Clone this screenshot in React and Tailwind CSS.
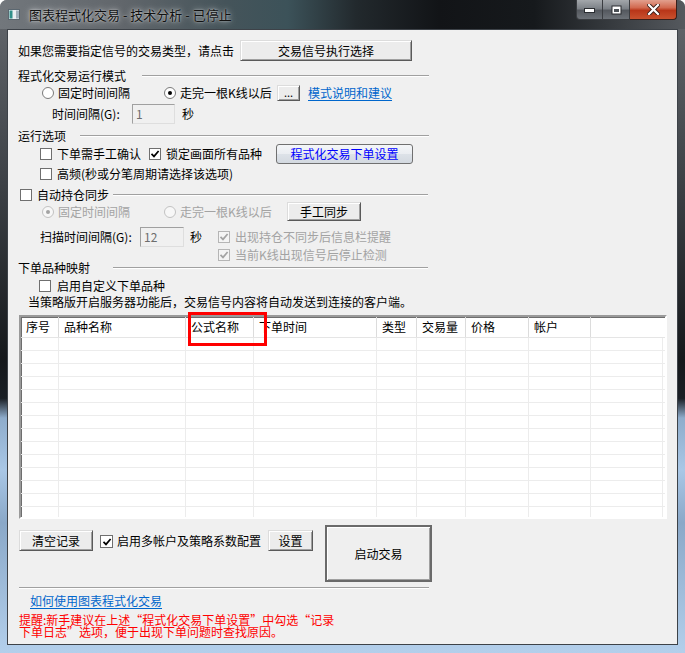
const Check = ({ checked, disabled, className = "" }) => (
  <div
    className={`w-[12px] h-[12px] shrink-0 border flex items-center justify-center ${
      disabled ? "border-[#b5b5b5] bg-[#f4f4f4]" : "border-[#6f6f6f] bg-white"
    } ${className}`}
  >
    {checked && (
      <svg width="10" height="10" viewBox="0 0 10 10">
        <path d="M1.5 4.8 L4 7.4 L8.6 2" fill="none" stroke={disabled ? "#a3a3a3" : "#000"} strokeWidth="1.7" />
      </svg>
    )}
  </div>
);

const Radio = ({ checked, disabled, className = "" }) => (
  <div
    className={`w-[12px] h-[12px] shrink-0 rounded-full border flex items-center justify-center ${
      disabled ? "border-[#c2c2c2] bg-[#f7f7f7]" : "border-[#7a7a7a] bg-white"
    } ${className}`}
  >
    {checked && <div className={`w-[4px] h-[4px] rounded-full ${disabled ? "bg-[#a3a3a3]" : "bg-black"}`} />}
  </div>
);

const Btn = ({ className = "", children }) => (
  <div
    className={`shrink-0 flex items-center justify-center bg-[#ececec] border border-t-[#dcdcdc] border-l-[#dcdcdc] border-r-[#5a5a5a] border-b-[#5a5a5a] shadow-[inset_1px_1px_0_#ffffff,inset_-1px_-1px_0_#a0a0a0] ${className}`}
  >
    {children}
  </div>
);

const Line = ({ className = "" }) => (
  <div className={`shrink-0 h-[2px] border-t border-t-[#a0a0a0] border-b border-b-white ${className}`} />
);

const Field = ({ className = "", children }) => (
  <div
    className={`shrink-0 h-[20px] flex items-center pl-[3px] bg-[#f0f0f0] text-[#6d6d6d] border border-t-[#a0a0a0] border-l-[#a0a0a0] border-r-[#dedede] border-b-[#dedede] ${className}`}
  >
    {children}
  </div>
);

const cols = [
  { w: "w-[38px]", t: "序号" },
  { w: "w-[127px]", t: "品种名称" },
  { w: "w-[68px]", t: "公式名称" },
  { w: "w-[123px]", t: "下单时间" },
  { w: "w-[40px]", t: "类型" },
  { w: "w-[49px]", t: "交易量" },
  { w: "w-[63px]", t: "价格" },
  { w: "w-[62px]", t: "帐户" },
];

export default function App() {
  return (
    <div className="w-[685px] h-[653px] overflow-hidden whitespace-nowrap rounded-t-[7px] bg-[linear-gradient(180deg,#64686d_0%,#3a3e43_30%,#15181b_55%,#1a1f25_61%,#8eaccb_64%,#a9c7e6_72%,#8aa8c8_80%,#b3cfeb_100%)] font-['Noto_Sans_CJK_SC',sans-serif] text-[12px] leading-[12px] text-black">
      {/* title bar */}
      <div className="h-[29px] flex items-start bg-[linear-gradient(90deg,#72777c_0%,#61666b_18%,#45545a_33%,#3c5259_42%,#22292d_52%,#121417_64%,#16191c_78%,#33373b_88%,#55595e_100%)]">
        <svg className="ml-[8px] mt-[9px] shrink-0" width="12" height="11" viewBox="0 0 12 11">
          <rect x="0.5" y="0.5" width="11" height="10" fill="#e8eef2" stroke="#5b6770" />
          <rect x="1.5" y="1.5" width="3" height="8" fill="#2f8f8a" />
          <rect x="8" y="1.5" width="3" height="8" fill="#9fb0bc" />
        </svg>
        <span className="ml-[9px] mt-[8px] text-[13px] leading-[13px] text-[#111] [text-shadow:0_0_6px_rgba(255,255,255,0.8),0_0_2px_rgba(255,255,255,0.6)]">
          图表程式化交易 - 技术分析 - 已停止
        </span>
        <div className="ml-auto mr-[8px] flex h-[20px]">
          <div className="flex rounded-bl-[4px] border border-t-0 border-[#3a3d41] overflow-hidden">
            <div className="w-[26px] h-full flex items-center justify-center bg-[linear-gradient(180deg,#a3a7ab_0%,#7c8187_45%,#55595f_55%,#6d7278_100%)] border-r border-[#3a3d41]">
              <svg width="11" height="6" viewBox="0 0 11 6">
                <rect x="0.5" y="1.5" width="10" height="4" fill="#fff" stroke="#2a2d31" />
              </svg>
            </div>
            <div className="w-[26px] h-full flex items-center justify-center bg-[linear-gradient(180deg,#a3a7ab_0%,#7c8187_45%,#55595f_55%,#6d7278_100%)]">
              <svg width="11" height="10" viewBox="0 0 11 10">
                <rect x="0.5" y="0.5" width="10" height="9" fill="#2a2d31" />
                <rect x="1.5" y="1.5" width="8" height="7" fill="#fff" />
                <rect x="3" y="4" width="5" height="3" fill="#4b5055" />
              </svg>
            </div>
          </div>
          <div className="w-[47px] h-full flex items-center justify-center rounded-br-[4px] border border-t-0 border-l-0 border-[#3a1f1a] bg-[linear-gradient(180deg,#e2a08e_0%,#d26a50_40%,#b93619_55%,#c9512e_100%)]">
            <svg width="13" height="11" viewBox="0 0 13 11">
              <path d="M2 1 L11 10 M11 1 L2 10" stroke="#3a1d16" strokeWidth="4" strokeLinecap="square" />
              <path d="M2 1 L11 10 M11 1 L2 10" stroke="#fff" strokeWidth="2.2" strokeLinecap="square" />
            </svg>
          </div>
        </div>
      </div>

      {/* client area */}
      <div className="relative mx-[7px] h-[616px] border border-[#3d4248] bg-[#f0f0f0] flex flex-col">
        <div className="mt-[10px] h-[21px] flex items-center">
          <span className="ml-[10px] w-[216px] shrink-0">如果您需要指定信号的交易类型，请点击</span>
          <Btn className="ml-[6px] w-[172px] h-[21px]">交易信号执行选择</Btn>
        </div>

        <div className="mt-[8px] h-[14px] flex items-center">
          <span className="ml-[10px] w-[108px] shrink-0">程式化交易运行模式</span>
          <Line className="ml-[16px] w-[287px]" />
        </div>

        <div className="mt-[2px] h-[16px] flex items-center">
          <Radio className="ml-[34px]" />
          <span className="ml-[4px] w-[72px] shrink-0">固定时间间隔</span>
          <Radio checked className="ml-[34px]" />
          <span className="ml-[4px] w-[90px] shrink-0">走完一根K线以后</span>
          <Btn className="ml-[7px] w-[23px] h-[16px] text-[11px] pb-[3px]">...</Btn>
          <span className="ml-[8px] text-[#0066cc] underline underline-offset-2">模式说明和建议</span>
        </div>

        <div className="mt-[3px] h-[20px] flex items-center">
          <span className="ml-[44px] w-[80px] shrink-0">时间间隔(G):</span>
          <Field className="w-[43px]">1</Field>
          <span className="ml-[7px]">秒</span>
        </div>

        <div className="mt-[5px] h-[14px] flex items-center">
          <span className="ml-[10px] w-[48px] shrink-0">运行选项</span>
          <Line className="ml-[14px] w-[349px]" />
        </div>

        <div className="mt-[1px] h-[20px] flex items-center">
          <Check className="ml-[32px]" />
          <span className="ml-[5px] w-[84px] shrink-0">下单需手工确认</span>
          <Check checked className="ml-[8px]" />
          <span className="ml-[5px] w-[96px] shrink-0">锁定画面所有品种</span>
          <div className="ml-[14px] w-[137px] h-[20px] shrink-0 flex items-center justify-center rounded-[3px] border border-[#707070] bg-[linear-gradient(180deg,#f4f6f8_0%,#eaedf1_50%,#dde2e8_51%,#d3d9e0_100%)] text-[#0000ff]">
            程式化交易下单设置
          </div>
        </div>

        <div className="mt-[3px] h-[14px] flex items-center">
          <Check className="ml-[32px]" />
          <span className="ml-[5px]">高频(秒或分笔周期请选择该选项)</span>
        </div>

        <div className="mt-[7px] h-[14px] flex items-center">
          <Check className="ml-[12px]" />
          <span className="ml-[5px] w-[72px] shrink-0">自动持仓同步</span>
          <Line className="ml-[4px] w-[315px]" />
        </div>

        <div className="h-[19px] flex items-center text-[#a3a3a3]">
          <Radio checked disabled className="ml-[34px]" />
          <span className="ml-[4px] w-[72px] shrink-0">固定时间间隔</span>
          <Radio disabled className="ml-[34px]" />
          <span className="ml-[4px] w-[90px] shrink-0">走完一根K线以后</span>
          <Btn className="ml-[17px] w-[74px] h-[19px] text-black">手工同步</Btn>
        </div>

        <div className="mt-[6px] h-[20px] flex items-center">
          <span className="ml-[32px] w-[100px] shrink-0">扫描时间间隔(G):</span>
          <Field className="w-[44px]">12</Field>
          <span className="ml-[6px] w-[12px] shrink-0">秒</span>
          <Check checked disabled className="ml-[16px]" />
          <span className="ml-[5px] text-[#a3a3a3]">出现持仓不同步后信息栏提醒</span>
        </div>

        <div className="mt-[1px] h-[14px] flex items-center">
          <Check checked disabled className="ml-[210px]" />
          <span className="ml-[5px] text-[#a3a3a3]">当前K线出现信号后停止检测</span>
        </div>

        <div className="h-[12px] flex items-center">
          <span className="ml-[10px] w-[72px] shrink-0">下单品种映射</span>
          <Line className="ml-[23px] w-[315px]" />
        </div>

        <div className="mt-[5px] h-[14px] flex items-center">
          <Check className="ml-[31px]" />
          <span className="ml-[6px]">启用自定义下单品种</span>
        </div>

        <div className="mt-[2px] h-[14px] flex items-center">
          <span className="ml-[20px]">当策略版开启服务器功能后，交易信号内容将自动发送到连接的客户端。</span>
        </div>

        {/* list view */}
        <div className="mt-[6px] ml-[11px] w-[648px] h-[204px] shrink-0 overflow-hidden bg-white border-2 border-t-[#9a9a9a] border-l-[#9a9a9a] border-r-white border-b-white shadow-[inset_1px_1px_0_#6e6e6e]">
          <div className="h-[21px] flex border-b border-[#e5e5e5]">
            {cols.map((c) => (
              <div key={c.t} className={`${c.w} shrink-0 h-full flex items-center pl-[5px] border-r border-[#dcdcdc]`}>
                {c.t}
              </div>
            ))}
            <div className="flex-1" />
          </div>
          {Array.from({ length: 14 }).map((_, i) => (
            <div key={i} className="h-[13px] flex border-b border-[#ececec]">
              {cols.map((c) => (
                <div key={c.t} className={`${c.w} shrink-0 h-full border-r border-[#ececec]`} />
              ))}
              <div className="w-[72px] shrink-0 h-full border-r border-[#ececec]" />
            </div>
          ))}
        </div>

        <div className="mt-[6px] h-[57px] flex items-start">
          <Btn className="mt-[5px] ml-[11px] w-[74px] h-[21px]">清空记录</Btn>
          <Check checked className="mt-[10px] ml-[7px] w-[13px] h-[13px]" />
          <span className="mt-[10px] ml-[4px] w-[144px] shrink-0">启用多帐户及策略系数配置</span>
          <Btn className="mt-[5px] ml-[7px] w-[45px] h-[21px]">设置</Btn>
          <div className="ml-[12px] w-[107px] h-[57px] shrink-0 flex items-center justify-center bg-[#efefef] border-2 border-[#6a6a6a] shadow-[inset_1px_1px_0_#ffffff,inset_-1px_-1px_0_#a0a0a0]">
            启动交易
          </div>
        </div>

        <Line className="mt-[5px] ml-[11px] w-[410px]" />

        <div className="mt-[6px] ml-[22px] h-[12px] text-[#0066cc] underline underline-offset-2">如何使用图表程式化交易</div>

        <div className="mt-[7px] ml-[11px] flex flex-col text-[#ff0000]">
          <span className="h-[12px]">提醒:新手建议在上述“程式化交易下单设置”中勾选“记录</span>
          <span className="h-[12px]">下单日志”选项，便于出现下单问题时查找原因。</span>
        </div>

        {/* highlight box over the list header */}
        <div className="absolute left-[180px] top-[282px] w-[79px] h-[34px] border-[3px] border-[#ff0000]" />
      </div>
    </div>
  );
}
